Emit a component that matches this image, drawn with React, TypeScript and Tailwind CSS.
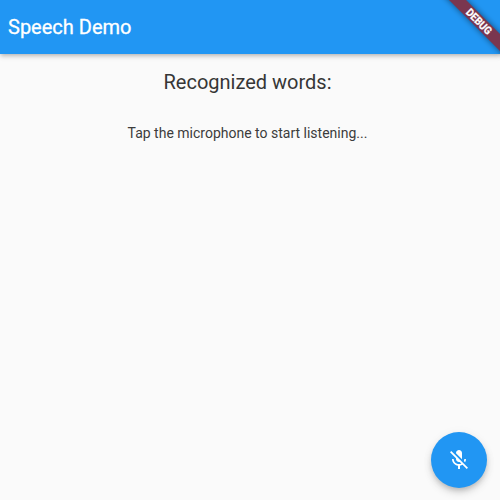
import React from "react";
import { MdMicOff } from "react-icons/md";

function DebugBanner() {
  return (
    <svg className="pointer-events-none absolute top-0 right-0 z-20" width="64" height="64" viewBox="0 0 64 64">
      <defs>
        <filter id="banner-shadow" x="-20%" y="-100%" width="140%" height="300%">
          <feGaussianBlur stdDeviation="3" />
        </filter>
      </defs>
      <g transform="translate(64 0) rotate(45)">
        <rect x="-50" y="24" width="100" height="12" fill="#000" fillOpacity="0.5" filter="url(#banner-shadow)" />
        <rect x="-50" y="24" width="100" height="12" fill="#7a364f" />
        <text x="0.3" y="33.8" textAnchor="middle" fill="#fff" stroke="#fff" strokeWidth="0.25" fontSize="10.8" fontWeight="700" textLength="31.5" lengthAdjust="spacingAndGlyphs" fontFamily="Roboto, sans-serif">
          DEBUG
        </text>
      </g>
    </svg>
  );
}

export default function App() {
  return (
    <div className="relative flex h-screen w-screen flex-col overflow-hidden bg-[#fafafa] font-['Roboto',sans-serif]">
      <header className="z-10 flex h-[54px] shrink-0 items-center bg-[#2196f3] px-2 shadow-[0_2px_4px_-1px_rgba(0,0,0,0.2),0_3px_5px_rgba(0,0,0,0.12)]">
        <h1 className="text-[20px] leading-6 font-normal text-white [-webkit-text-stroke:0.3px_white]">Speech Demo</h1>
      </header>
      <main className="flex flex-1 flex-col items-center pt-4 pr-[5px]">
        <h2 className="text-[20px] leading-6 text-[#363636]">Recognized words:</h2>
        <p className="mt-[31px] text-[14px] leading-4 text-[#3c3c3c]">Tap the microphone to start listening...</p>
      </main>
      <button
        aria-label="Listen"
        className="absolute right-[13px] bottom-3 flex size-14 items-center justify-center rounded-full bg-[#2196f3] text-white shadow-[0_3px_5px_-1px_rgba(0,0,0,0.16),0_5px_9px_rgba(0,0,0,0.12),0_1px_12px_rgba(0,0,0,0.04)]"
      >
        <MdMicOff size={24} />
      </button>
      <DebugBanner />
    </div>
  );
}
